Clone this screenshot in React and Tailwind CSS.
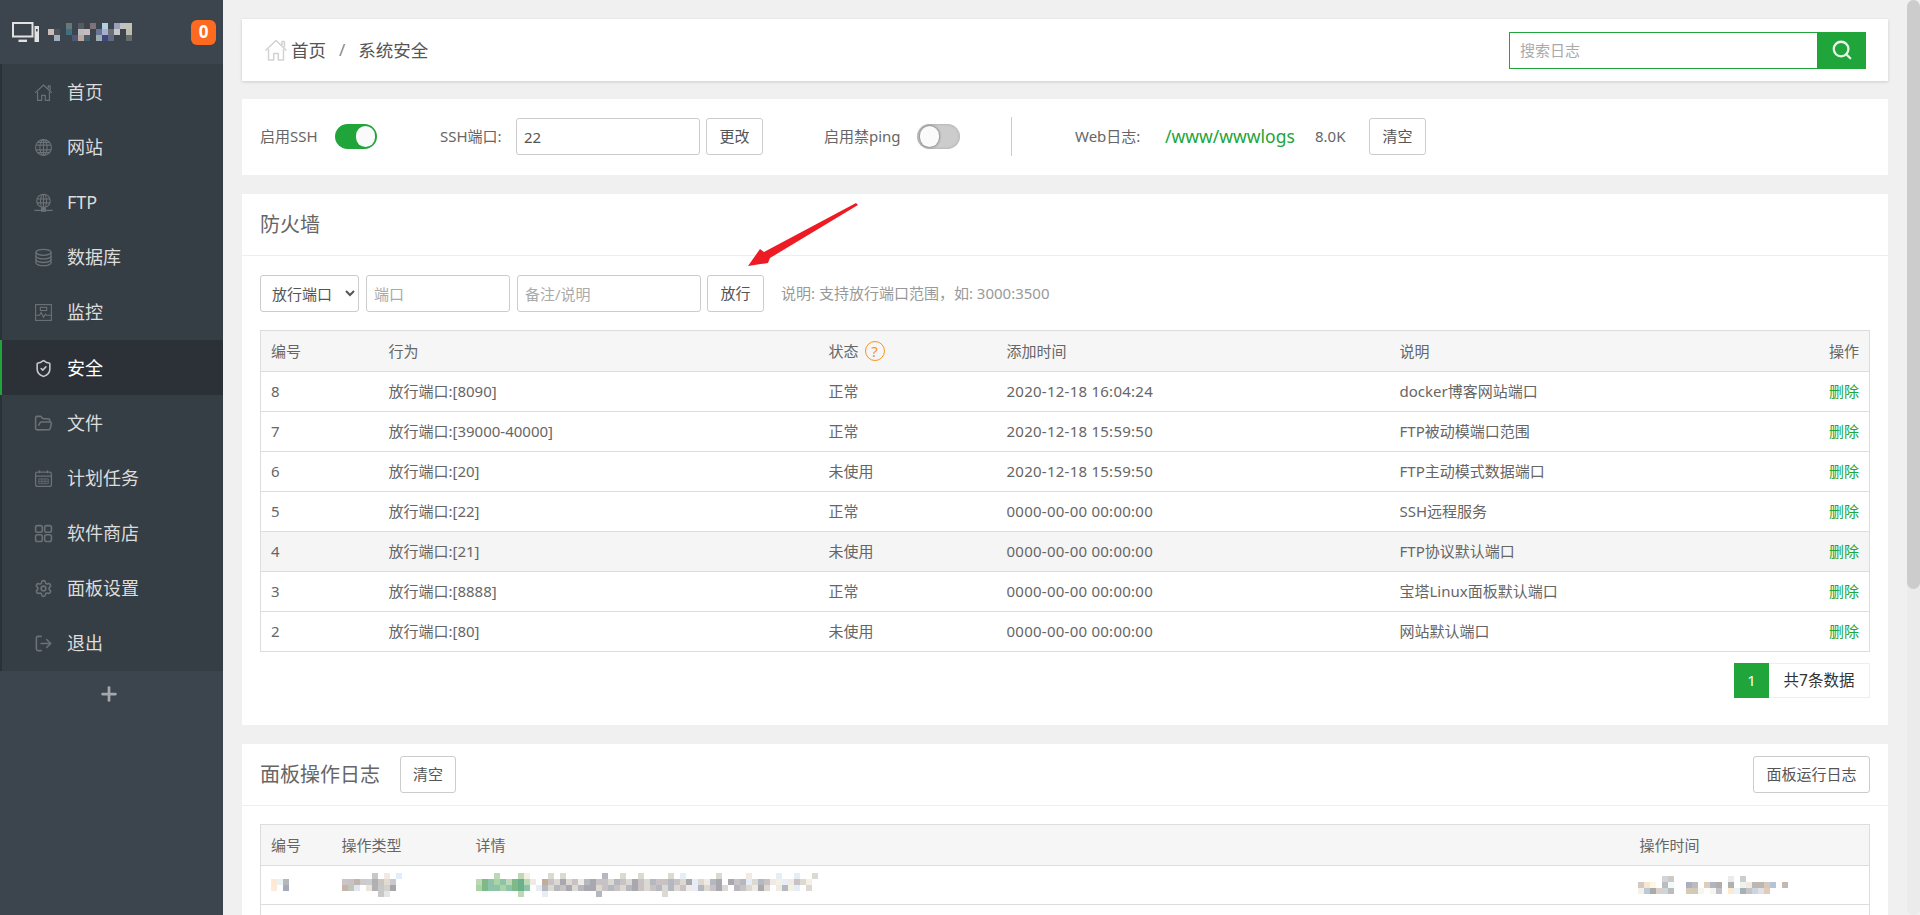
import React from 'react';
import { Search, Settings, ShieldCheck, FolderOpen, LogOut, Plus } from 'lucide-react';

const HomeIcon = ({ className }) => (
    <svg viewBox="0 0 24 24" fill="none" stroke="currentColor" strokeWidth="1.5" strokeLinejoin="round" className={className}>
        <path d="M1.5 12.5 12 2.5l10.5 10M18 7V3.6h2.4v5.6" />
        <path d="M4.5 11v11h5.2v-6.4h4.6V22h5.2V11" />
    </svg>
);

const GlobeIcon = ({ className }) => (
    <svg viewBox="0 0 24 24" fill="none" stroke="currentColor" strokeWidth="1.4" className={className}>
        <circle cx="12" cy="12" r="10" />
        <ellipse cx="12" cy="12" rx="4.6" ry="10" />
        <path d="M12 2v20M2.4 9h19.2M2.4 15h19.2M4.5 5.5h15M4.5 18.5h15" />
    </svg>
);

const FtpIcon = ({ className }) => (
    <svg viewBox="0 0 24 24" fill="none" stroke="currentColor" strokeWidth="1.4" className={className}>
        <circle cx="12" cy="10" r="8.5" />
        <ellipse cx="12" cy="10" rx="3.8" ry="8.5" />
        <path d="M12 1.5v17M3.8 7.5h16.4M3.8 12.5h16.4" />
        <path d="M0.5 22h23" strokeWidth="1.6" />
        <rect x="9.5" y="19.5" width="5" height="3.5" fill="currentColor" />
    </svg>
);

const DatabaseIcon = ({ className }) => (
    <svg viewBox="0 0 24 24" fill="none" stroke="currentColor" strokeWidth="1.7" className={className}>
        <ellipse cx="12" cy="5.5" rx="9.5" ry="3.8" />
        <path d="M2.5 5.5v13c0 2.1 4.3 3.8 9.5 3.8s9.5-1.7 9.5-3.8v-13" />
        <path d="M2.5 10c0 2.1 4.3 3.8 9.5 3.8s9.5-1.7 9.5-3.8M2.5 14.5c0 2.1 4.3 3.8 9.5 3.8s9.5-1.7 9.5-3.8" />
    </svg>
);

const MonitorIcon = ({ className }) => (
    <svg viewBox="0 0 24 24" fill="none" stroke="currentColor" strokeWidth="1.4" className={className}>
        <rect x="2" y="2" width="20" height="20" />
        <rect x="8" y="5.5" width="8" height="4" />
        <path d="M2 15.5h5l2-3.5 3 6 2.5-4 1.5 1.5h6" />
    </svg>
);

const CalendarIcon = ({ className }) => (
    <svg viewBox="0 0 24 24" fill="none" stroke="currentColor" strokeWidth="1.6" className={className}>
        <rect x="2" y="4" width="20" height="18" rx="2.5" />
        <path d="M7 1.5v4M17 1.5v4M2 9h20" />
        <path d="M6 12.5h12v6H6zM6 15.5h12M10 12.5v6M14 12.5v6" strokeWidth="1" />
    </svg>
);

const GridIcon = ({ className }) => (
    <svg viewBox="0 0 24 24" fill="none" stroke="currentColor" strokeWidth="2" className={className}>
        <rect x="2" y="2" width="8.5" height="8.5" rx="2.2" />
        <rect x="13.5" y="2" width="8.5" height="8.5" rx="2.2" />
        <rect x="2" y="13.5" width="8.5" height="8.5" rx="2.2" />
        <rect x="13.5" y="13.5" width="8.5" height="8.5" rx="2.2" />
    </svg>
);

const menu = [
    { label: '首页', icon: HomeIcon },
    { label: '网站', icon: GlobeIcon },
    { label: 'FTP', icon: FtpIcon },
    { label: '数据库', icon: DatabaseIcon },
    { label: '监控', icon: MonitorIcon },
    { label: '安全', icon: ShieldCheck, active: true },
    { label: '文件', icon: FolderOpen },
    { label: '计划任务', icon: CalendarIcon },
    { label: '软件商店', icon: GridIcon },
    { label: '面板设置', icon: Settings },
    { label: '退出', icon: LogOut },
];

const rules = [
    ['8', '放行端口:[8090]', '正常', '2020-12-18 16:04:24', 'docker博客网站端口'],
    ['7', '放行端口:[39000-40000]', '正常', '2020-12-18 15:59:50', 'FTP被动模端口范围'],
    ['6', '放行端口:[20]', '未使用', '2020-12-18 15:59:50', 'FTP主动模式数据端口'],
    ['5', '放行端口:[22]', '正常', '0000-00-00 00:00:00', 'SSH远程服务'],
    ['4', '放行端口:[21]', '未使用', '0000-00-00 00:00:00', 'FTP协议默认端口'],
    ['3', '放行端口:[8888]', '正常', '0000-00-00 00:00:00', '宝塔Linux面板默认端口'],
    ['2', '放行端口:[80]', '未使用', '0000-00-00 00:00:00', '网站默认端口'],
];

// blurred-out bits of the screenshot, one array per row of 6px blocks
const _ = null;
const logoBlur = [
    [_, _, _, '#68787a', _, '#555b60', _, '#7e7379', _, '#b0cfe0', _, '#9aa0bc', '#c5c0c8', '#c0c4b4'],
    ['#c9bcb9', '#4f5355', _, '#40707f', _, '#b9bbc1', '#cbbcbb', '#3e444c', '#667596', '#a9aed0', '#6b7078', '#c4c8c8', _, '#bcbfb0'],
    [_, '#a0aec0', _, _, '#4f5870', '#bca99c', '#44606e', _, '#9aacb0', '#3f4778', '#606a85', _, _, '#646c6c'],
];
const idBlur = [
    ['#fde8d5', '#e8f3f8', '#b5b8b8'],
    ['#fdeadb', _, '#a4aabb'],
];
const typeBlur = [
    [_, _, _, _, _, '#c8c8c8', _, '#efeae4', _, '#e1edf8'],
    ['#ccc5c8', '#c9c2c4', '#bfb5b0', '#cdcacb', '#cdcdcd', '#b0b0b0', '#c8c5c2', '#e0dad2', '#c8c8cd'],
    ['#c6b4a8', '#c4c5ba', '#dfe8f2', _, '#ebe4df', '#b0b0b5', '#c8c8c8', '#d5d0cb', '#a5a5ab'],
    [_, _, _, _, _, _, '#c8c8c8', '#e2e6e6'],
];
const timeBlur = [
    [_, _, _, _, '#d0d4dc', '#cfc9c6', _, _, _, _, _, _, _, _, _, '#ebebeb', _, '#cdcdcd'],
    ['#d2c9c6', '#f7e6d2', '#fdf8e2', _, '#bcbcbc', '#f0fafa', _, _, '#abb0c0', '#bcbcbc', _, '#e0cdb8', '#afb4c8', '#b4aca8', _, '#b0b0b0', _, '#eef3ec', '#efeae4', '#bcb6b4', '#bcb8b0', '#d5c8bc', '#b4c4d4', _, '#c4b8b0'],
    ['#f5f0e8', '#bcc8d4', '#aaaaaa', '#dcd0c8', '#ccd4dc', '#bcbcbc', _, _, '#d8c8b8', '#d0c8b8', '#f8f4ee', _, '#f8f4ee', '#c0c0c8', _, '#fde8d0', '#e6f4f8', '#a8b0b4', '#c4c4c4', '#ccd4e0', '#e0e0e8', '#e0ccb8'],
];
const detailPalette = {
    G: '#7fb98a', H: '#aad4a6', I: '#bdd8b4', J: '#8cc3a9', K: '#6ab08a',
    a: '#c9c2c4', b: '#b5b8bf', c: '#dcd8d2', d: '#a8a8ae', e: '#efeae4', f: '#e6edf6', h: '#bfae9c', i: '#f5f0e6',
};
const detailBlur = [
    '...I...Ii...c.c......b..c..c....c.f.....c....e....f..f..c',
    'IGJHJIGKIe.hacdcaebdaacbacdacbaabacdfcebd.dabfcbaeifeaci.',
    'HGJJHJGKJ.fbcbadcbddcabacbdacabcbcaefbcadc.bacedc.ebif.c.',
    '.......I...f........b..........c.........................',
].map((row) => row.split('').map((c) => detailPalette[c] || null));

const Blur = ({ rows }) => (
    <div className="flex flex-col">
        {rows.map((row, i) => (
            <div key={i} className="flex h-[6px]">
                {row.map((color, j) => (
                    <span key={j} className="w-[6px] h-[6px] shrink-0" style={color ? { backgroundColor: color } : undefined} />
                ))}
            </div>
        ))}
    </div>
);

const Btn = ({ className = '', children }) => (
    <button className={"h-[37px] border border-[#ccc] rounded-[3px] bg-white text-[#555] text-[15px] " + className}>
        {children}
    </button>
);

const Field = ({ className = '', ...props }) => (
    <input className={"h-[37px] border border-[#ccc] rounded-[3px] bg-white px-[7px] text-[15px] text-[#555] outline-none placeholder:text-[#aaa] " + className} {...props} />
);

const Toggle = ({ on }) => (
    on ? (
        <span className="flex justify-end items-center w-[42px] h-[25px] rounded-full bg-[#20a53a] pr-[2px]">
            <span className="w-[19px] h-[21px] rounded-full bg-[#fafafa]" />
        </span>
    ) : (
        <span className="flex items-center w-[43px] h-[25px] rounded-full bg-[#ccc] pl-[3px] shadow-[inset_0_0_3px_rgba(0,0,0,0.2)]">
            <span className="w-[19px] h-[21px] rounded-full bg-[#fafafa] shadow-[0_0_3px_rgba(0,0,0,0.6)]" />
        </span>
    )
);

const Sidebar = () => (
    <aside className="w-[223px] shrink-0 h-full bg-[#3c444d] flex flex-col">
        <div className="h-[64px] shrink-0 flex items-center pl-[12px] pr-[7px]">
            <svg viewBox="0 0 27 20" fill="none" className="w-[27px] h-[20px] shrink-0 text-[#e2e2e2]">
                <rect x="1" y="1" width="19.5" height="13.5" stroke="currentColor" strokeWidth="2" />
                <path d="M6.5 18.8h8.5" stroke="currentColor" strokeWidth="2.4" />
                <rect x="22.5" y="4" width="4.5" height="16" fill="currentColor" />
                <rect x="24" y="7" width="1.6" height="2.4" fill="#3c444d" />
            </svg>
            <div className="ml-[9px]"><Blur rows={logoBlur} /></div>
            <span className="ml-auto w-[25px] h-[25px] rounded-[6px] bg-[#ff6a21] text-white text-[17px] font-bold flex items-center justify-center">0</span>
        </div>
        <nav className="bg-[#363e45] border-l-2 border-[#2c3138]">
            {menu.map(({ label, icon: Icon, active }) => (
                <div
                    key={label}
                    className={"h-[55.2px] flex items-center pl-[32px] pt-[1px] text-[18px] -ml-[2px] border-l-2 " + (active ? "bg-[#2c3138] border-[#20a53a] text-white" : "border-[#2c3138] text-[#dcdcdc]")}
                >
                    <Icon className={"w-[19px] h-[19px] shrink-0 " + (active ? "text-[#c8c8c8]" : "text-[#6b7176]")} />
                    <span className="ml-[14px]">{label}</span>
                </div>
            ))}
        </nav>
        <div className="flex justify-center pt-[12px] pr-[6px]">
            <Plus size={22} strokeWidth={3} className="text-[#a5a8ab]" />
        </div>
    </aside>
);

const HeadCell = ({ className = '', children }) => (
    <th className={"font-normal text-left px-[10px] text-[15px] text-[#666] " + className}>{children}</th>
);

const Firewall = () => (
    <section className="relative bg-white mt-[19px]">
        <div className="h-[62px] border-b border-[#eee] pl-[18px] pt-[1px] flex items-center text-[20px] text-[#666]">防火墙</div>
        <div className="pl-[18px] pr-[18px] pt-[19px] pb-[27px]">
            <div className="flex items-center">
                <select className="w-[99px] h-[37px] border border-[#ccc] rounded-[3px] bg-white pl-[7px] text-[15px] text-[#555]">
                    <option>放行端口</option>
                </select>
                <Field className="w-[144px] ml-[7px]" placeholder="端口" />
                <Field className="w-[184px] ml-[7px]" placeholder="备注/说明" />
                <Btn className="w-[57px] ml-[6px]">放行</Btn>
                <span className="ml-[17px] text-[15px] text-[#999]">说明: 支持放行端口范围，如: 3000:3500</span>
            </div>
            <table className="w-full table-fixed border-collapse border border-[#ddd] mt-[18px]">
                <colgroup>
                    <col className="w-[118px]" />
                    <col className="w-[440px]" />
                    <col className="w-[178px]" />
                    <col className="w-[393px]" />
                    <col />
                    <col className="w-[100px]" />
                </colgroup>
                <thead>
                    <tr className="h-[41px] bg-[#f6f6f6] border-b border-[#ddd]">
                        <HeadCell>编号</HeadCell>
                        <HeadCell>行为</HeadCell>
                        <HeadCell>
                            <span className="flex items-center gap-[6px]">
                                状态
                                <span className="w-[20px] h-[20px] rounded-full border border-[#f7941d] text-[#f7941d] text-[15px] flex items-center justify-center">?</span>
                            </span>
                        </HeadCell>
                        <HeadCell>添加时间</HeadCell>
                        <HeadCell>说明</HeadCell>
                        <HeadCell className="text-right">操作</HeadCell>
                    </tr>
                </thead>
                <tbody>
                    {rules.map((r) => (
                        <tr key={r[0]} className={"h-[40px] border-b border-[#ddd] text-[15px] text-[#666] " + (r[0] === '4' ? "bg-[#f5f5f5]" : "")}>
                            <td className="px-[10px]">{r[0]}</td>
                            <td className="px-[10px]">{r[1]}</td>
                            <td className="px-[10px]">{r[2]}</td>
                            <td className="px-[10px] tracking-[0.25px]">{r[3]}</td>
                            <td className="px-[10px]">{r[4]}</td>
                            <td className="px-[10px] text-right text-[#20a53a]">删除</td>
                        </tr>
                    ))}
                </tbody>
            </table>
            <div className="flex justify-end mt-[11px]">
                <span className="w-[35px] h-[35px] bg-[#20a53a] text-white text-[15px] flex items-center justify-center">1</span>
                <span className="w-[101px] h-[35px] border border-[#eee] border-l-0 text-[#333] text-[15.5px] flex items-center justify-center">共7条数据</span>
            </div>
        </div>
        {/* red annotation arrow */}
        <svg viewBox="0 0 125 72" className="absolute left-[498px] top-[6px] w-[125px] h-[72px]">
            <polygon points="8,66 20,49 24,52 116,3 118,5 30,58 28,63" fill="#ed1c24" />
        </svg>
    </section>
);

const PanelLog = () => (
    <section className="bg-white mt-[19px]">
        <div className="h-[62px] border-b border-[#eee] pl-[18px] pr-[18px] flex items-center">
            <span className="text-[20px] text-[#666]">面板操作日志</span>
            <Btn className="w-[56px] ml-[20px]">清空</Btn>
            <Btn className="w-[117px] ml-auto">面板运行日志</Btn>
        </div>
        <div className="pl-[18px] pr-[18px] pt-[18px]">
            <table className="w-full table-fixed border-collapse border border-[#ddd]">
                <colgroup>
                    <col className="w-[71px]" />
                    <col className="w-[134px]" />
                    <col />
                    <col className="w-[240px]" />
                </colgroup>
                <thead>
                    <tr className="h-[41px] bg-[#f6f6f6] border-b border-[#ddd]">
                        <HeadCell>编号</HeadCell>
                        <HeadCell>操作类型</HeadCell>
                        <HeadCell>详情</HeadCell>
                        <HeadCell>操作时间</HeadCell>
                    </tr>
                </thead>
                <tbody>
                    <tr className="h-[39px] border-b border-[#ddd]">
                        <td className="px-[10px]"><Blur rows={idBlur} /></td>
                        <td className="px-[10px]"><Blur rows={typeBlur} /></td>
                        <td className="px-[10px]"><Blur rows={detailBlur} /></td>
                        <td className="px-[8px]"><Blur rows={timeBlur} /></td>
                    </tr>
                    <tr className="h-[39px]"><td colSpan={4} /></tr>
                </tbody>
            </table>
        </div>
    </section>
);

export default function App() {
    return (
        <div className="w-[1920px] h-[915px] flex overflow-hidden bg-[#f0f0f0] font-['Noto_Sans','Noto_Sans_CJK_SC',sans-serif]">
            <Sidebar />

            <main className="flex-1 min-w-0 h-full overflow-hidden pl-[19px] pr-[19px] pt-[19px]">
                {/* breadcrumb bar */}
                <div className="h-[62px] bg-white shadow-[0_1px_3px_rgba(0,0,0,0.15)] flex items-center pl-[22px] pr-[22px]">
                    <HomeIcon className="w-[24px] h-[24px] text-[#d2d2d2]" />
                    <span className="ml-[3px] text-[17.5px] text-[#555]">首页</span>
                    <span className="ml-[13px] text-[17px] text-[#888]">/</span>
                    <span className="ml-[13px] text-[17.5px] text-[#555]">系统安全</span>
                    <div className="ml-auto flex h-[37px]">
                        <input className="w-[309px] h-full border border-[#20a53a] pl-[10px] text-[15px] outline-none placeholder:text-[#aaa]" placeholder="搜索日志" />
                        <button className="w-[48px] h-full bg-[#20a53a] flex items-center justify-center">
                            <Search size={22} strokeWidth={2.5} className="text-[#e6f5e9]" />
                        </button>
                    </div>
                </div>

                {/* ssh / ping / log settings */}
                <div className="h-[76px] bg-white mt-[18px] pl-[18px] pb-[1px] flex items-center text-[15px] text-[#666]">
                    <span className="w-[75px]">启用SSH</span>
                    <Toggle on />
                    <span className="ml-[63px] w-[76px]">SSH端口:</span>
                    <Field className="w-[184px] text-[#444]" defaultValue="22" />
                    <Btn className="w-[57px] ml-[6px]">更改</Btn>
                    <span className="ml-[61px] w-[93px]">启用禁ping</span>
                    <Toggle />
                    <span className="ml-[51px] w-px h-[39px] bg-[#ccc]" />
                    <span className="ml-[63px] w-[90px]">Web日志:</span>
                    <span className="w-[150px] text-[#20a53a] text-[17.5px]">/www/wwwlogs</span>
                    <span className="w-[54px]">8.0K</span>
                    <Btn className="w-[57px]">清空</Btn>
                </div>

                <Firewall />
                <PanelLog />
            </main>

            {/* fake page scrollbar */}
            <div className="w-[13px] shrink-0 h-full bg-[#ebebeb] rounded-[7px]">
                <div className="h-[589px] bg-[#ccc] rounded-[7px]" />
            </div>
        </div>
    );
}
